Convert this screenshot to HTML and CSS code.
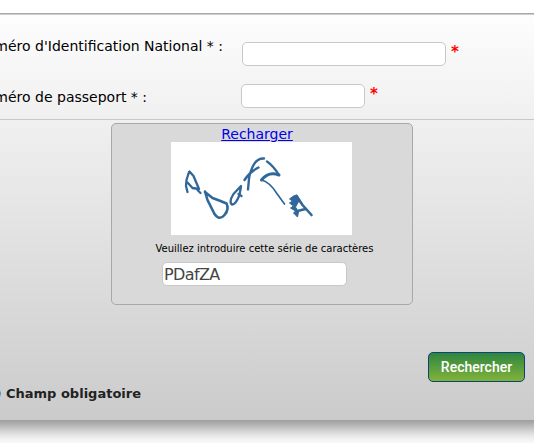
FILE: index.html
```html
<!DOCTYPE html>
<html lang="fr">
<head>
    <meta charset="UTF-8">
    <meta name="viewport" content="width=device-width, initial-scale=1.0">
    <title>Recherche</title>
    <link rel="stylesheet" href="styles.css">
</head>
<body>
    <form class="panel" onsubmit="return false">
        <div class="fields">
            <div class="row row-nin">
                <label for="nin"><span>Numéro d'Identification National * :</span></label>
                <input type="text" id="nin" name="nin" class="field">
                <span class="required">*</span>
            </div>
            <div class="row row-passport">
                <label for="passport"><span>Numéro de passeport * :</span></label>
                <input type="text" id="passport" name="passport" class="field">
                <span class="required">*</span>
            </div>
        </div>

        <div class="captcha">
            <a href="#" class="reload">Recharger</a>
            <svg class="captcha-image" width="181" height="93" viewBox="-0.5 0 181 93" fill="none" stroke="#2f6899" stroke-width="2" stroke-linecap="round" stroke-linejoin="round">
                <path stroke-width="2.3" d="M17.500 30L15 38L14.500 44L16 50M18 29.500L22 34L27.500 47L21 46L16 40.500M26 48L29 51"/>
                <path stroke-width="2.6" d="M33.500 49.500L36 58L43 72Q48 79 53 73Q58 67 55 61.500L49 59L41 56L33.500 50"/>
                <path stroke-width="2.3" d="M69.500 44L62 52Q57 60 60.500 62.500Q64 63 68 53L69.500 44.500M67 52L70 54"/>
                <path stroke-width="2.4" d="M92.500 16.500Q86 16 82 23Q78 31 77.500 37L76.500 47.500M73 38Q78 30 87 25.500"/>
                <path stroke-width="2.2" d="M95.500 19.500Q102 24 107.500 33"/>
                <path stroke-width="3" d="M107.500 33Q97 29 90 38"/>
                <path stroke-width="1.700" d="M90 38Q98 40 105 51L113 62"/>
                <path fill="#2f6899" stroke-width="1" d="M125 53L122 54L118 57L121 59L118 61L122 64L119 66L124 69L122 71L126 75L127 70L124 65L128 58Z"/>
                <path stroke-width="2.600" d="M125 54L131 63L140 73M126 69L134 67"/>
            </svg>
            <div class="hint">Veuillez introduire cette série de caractères</div>
            <input type="text" name="captcha" class="field captcha-input" value="PDafZA">
        </div>

        <button type="submit" class="btn-search">Rechercher</button>
        <div class="note"><span>(*) Champ obligatoire</span></div>
    </form>
</body>
</html>
```
FILE: styles.css
```css
* { box-sizing: border-box; }
body { margin: 0; padding-top: 13px; height: 443px; overflow: hidden; background: #fff; font-family: Verdana, "DejaVu Sans", sans-serif; font-size: 14px; color: #000; }
.panel {
    display: flex; flex-direction: column; height: 407px;
    border-top: 1px solid #a8a8a8;
    background: linear-gradient(#fdfdfd, #cbcbcb);
    box-shadow: 0 -12px 18px 20px #888;
    clip-path: inset(0 0 -30px 0);
}
.fields { height: 106px; padding-top: 27px; border-top: 1px solid #ccc; border-bottom: 1px solid #c8c8c8; }
.row { display: flex; align-items: flex-start; height: 42px; }
label { display: flex; justify-content: flex-end; overflow: hidden; white-space: nowrap; line-height: 18px; }
label span { flex: none; }
.row-nin label { width: 223px; margin: -5px 19px 0 0; }
.row-passport label { width: 147px; margin: 4px 94px 0 0; }
.field { height: 24px; padding: 0 1px; border: 1px solid #c8c8c8; border-radius: 5px; background: #fff; font-family: inherit; }
.row-nin .field { width: 204px; }
.row-passport .field { width: 124px; }
.required { margin: 0 0 0 5px; color: red; font-size: 15px; font-weight: bold; line-height: 20px; }

.captcha {
    display: flex; flex-direction: column; align-items: center;
    width: 302px; height: 182px; margin: 3px 0 0 111px;
    border: 1px solid #a8a8a8; border-radius: 5px; background: #d9d9d9;
}
.reload { height: 18px; padding-right: 10px; color: #0000ee; line-height: 20px; }
.captcha-image { flex: none; margin-right: 1px; background: #fff; }
.hint { margin: 7px 0 0 5px; font-size: 10px; line-height: 13px; }
.captcha-input { width: 185px; margin: 7px 15px 0 0; color: #444; font-size: 16px; letter-spacing: -0.6px; }

.btn-search {
    align-self: flex-end; width: 97px; height: 30px; margin: 47px 9px 0 0; padding: 0;
    border: 1px solid #0b4278; border-radius: 5px;
    background: linear-gradient(#2e8540, #82b33a);
    color: #fff; font-family: Roboto, sans-serif; font-size: 14px; font-weight: 500;
}
.note { display: flex; justify-content: flex-end; width: 141px; margin-top: 3px; overflow: hidden; white-space: nowrap; color: #222; font-size: 13px; font-weight: bold; line-height: 18px; }
.note span { flex: none; }
```
